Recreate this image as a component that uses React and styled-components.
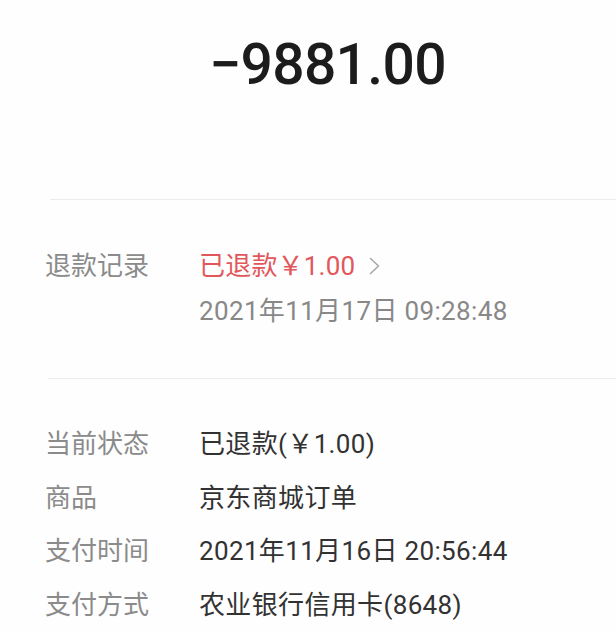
import React from "react";
import styled, { createGlobalStyle } from "styled-components";

const Global = createGlobalStyle`
  html, body { margin: 0; padding: 0; background: #ffffff; }
  body { font-family: Roboto, "Noto Sans CJK SC", "Noto Sans", sans-serif; }
`;

const Page = styled.div`
  width: 616px;
  height: 632px;
  overflow: hidden;
  background: #fefefe;
`;

const AmountBlock = styled.div`
  height: 199px;
  box-sizing: border-box;
  padding-top: 30px;
  padding-left: 39px;
  display: flex;
  justify-content: center;
`;

const Amount = styled.div`
  font-family: Roboto, sans-serif;
  font-size: 57px;
  font-weight: 500;
  line-height: 70px;
  color: #1c1c1c;
  letter-spacing: -0.7px;
`;

const Divider = styled.div`
  height: 1px;
  margin-left: ${(p) => p.$inset}px;
  background: #ebebeb;
`;

const RefundSection = styled.div`
  display: grid;
  grid-template-columns: 154px 1fr;
  padding: 48px 0 49px 45px;
`;

const Label = styled.div`
  font-size: 26px;
  line-height: 36px;
  color: #8b8b8b;
  white-space: nowrap;
`;

const RefundValue = styled.div`
  display: flex;
  flex-direction: column;
  gap: 9px;
`;

const RefundLine = styled.div`
  display: flex;
  align-items: center;
  gap: 14px;
  font-size: 26px;
  line-height: 36px;
  color: #e2575c;
  letter-spacing: 0.2px;
`;

const Chevron = styled.svg`
  width: 11px;
  height: 18px;
  flex: none;
`;

const DateLine = styled.div`
  font-size: 26px;
  line-height: 36px;
  color: #888888;
  white-space: nowrap;
  letter-spacing: 0.35px;
`;

const InfoList = styled.div`
  padding: 38px 0 0 45px;
  display: flex;
  flex-direction: column;
`;

const InfoRow = styled.div`
  display: grid;
  grid-template-columns: 154px 1fr;
  height: 53.7px;
  align-items: center;
`;

const Value = styled.div`
  font-size: 26px;
  line-height: 36px;
  color: #323232;
  white-space: nowrap;
  letter-spacing: 0.35px;
`;

const rows = [
  ["当前状态", "已退款(￥1.00)"],
  ["商品", "京东商城订单"],
  ["支付时间", "2021年11月16日 20:56:44"],
  ["支付方式", "农业银行信用卡(8648)"],
];

export default function App() {
  return (
    <Page>
      <Global />
      <AmountBlock>
        <Amount>−9881.00</Amount>
      </AmountBlock>
      <Divider $inset={50} />
      <RefundSection>
        <Label>退款记录</Label>
        <RefundValue>
          <RefundLine>
            <span>已退款￥1.00</span>
            <Chevron viewBox="0 0 11 18" aria-hidden="true">
              <polyline
                points="1.5,1.5 9.5,9 1.5,16.5"
                fill="none"
                stroke="#a8a8a8"
                strokeWidth="1.6"
                strokeLinecap="round"
                strokeLinejoin="round"
              />
            </Chevron>
          </RefundLine>
          <DateLine>2021年11月17日 09:28:48</DateLine>
        </RefundValue>
      </RefundSection>
      <Divider $inset={48} />
      <InfoList>
        {rows.map(([k, v]) => (
          <InfoRow key={k}>
            <Label>{k}</Label>
            <Value>{v}</Value>
          </InfoRow>
        ))}
      </InfoList>
    </Page>
  );
}
